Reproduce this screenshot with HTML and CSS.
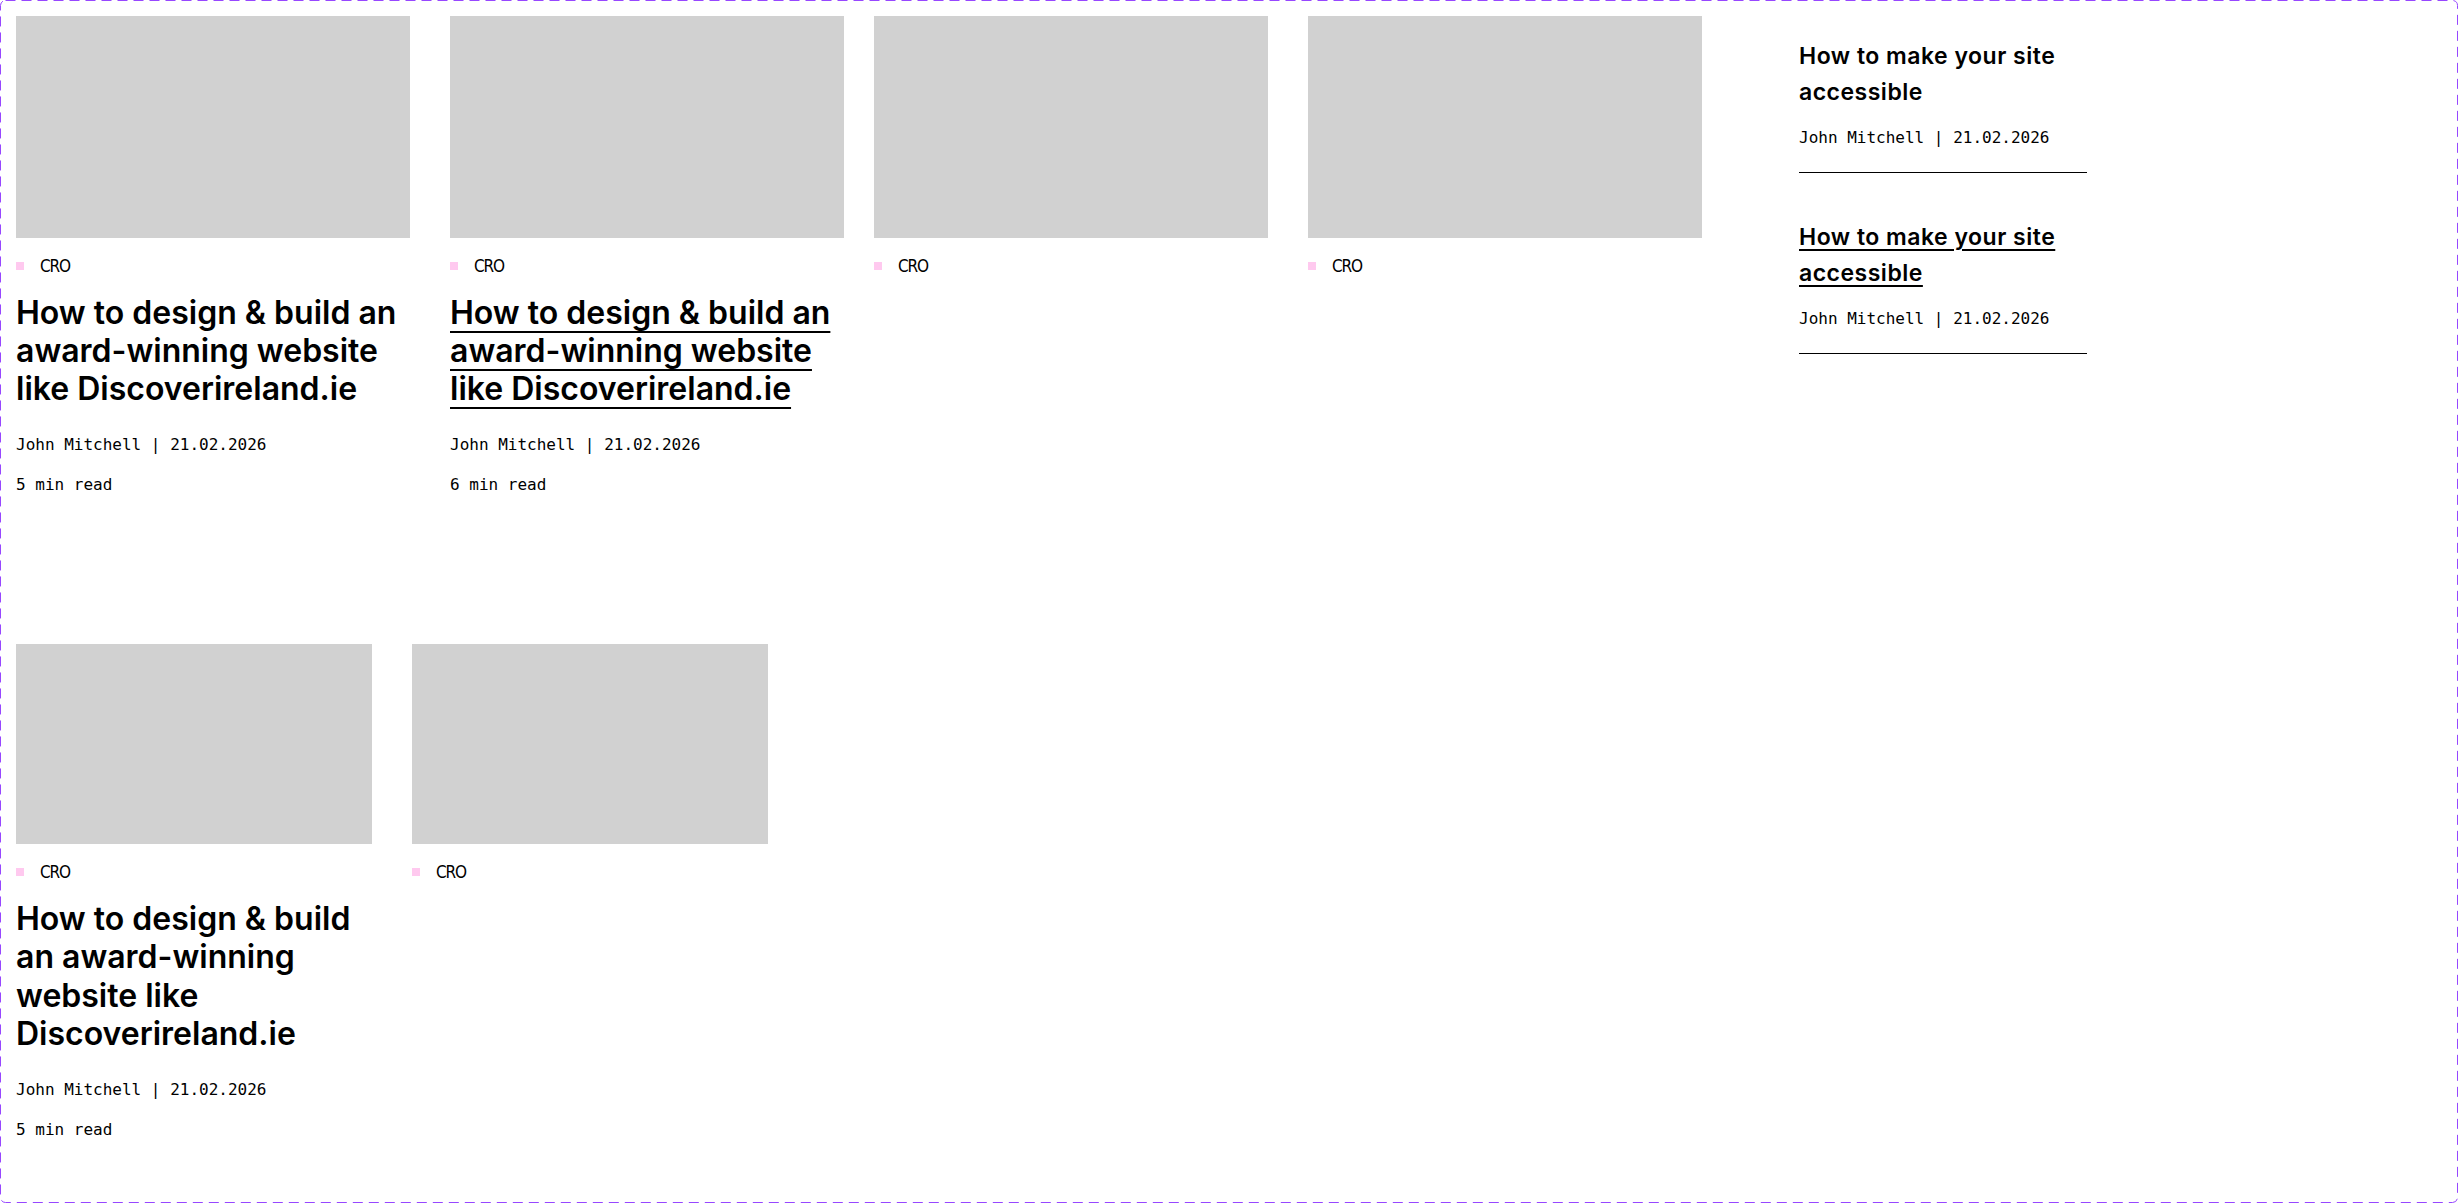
FILE: index.html
```html
<!doctype html>
<html>
<head>
	<meta http-equiv="content-type" content="text/html;charset=utf-8"/>
	<title>Blog listing</title>
	<link rel="stylesheet" href="styles.css">
</head>
<body>
	<div class="page">
		<svg class="frame" width="2458" height="1203" viewBox="0 0 2458 1203">
			<rect x="0.5" y="0.5" width="2457" height="1202" rx="5" ry="5"/>
		</svg>

		<div class="posts">
			<div class="row">
				<div class="group">
					<article class="card card-lg">
						<div class="thumb"></div>
						<div class="tag"><span class="tag-dot"></span>CRO</div>
						<h2 class="card-title">How to design &amp; build an award-winning website like Discoverireland.ie</h2>
						<p class="meta">John Mitchell | 21.02.2026</p>
						<p class="meta">5 min read</p>
					</article>
					<article class="card card-lg">
						<div class="thumb"></div>
						<div class="tag"><span class="tag-dot"></span>CRO</div>
						<h2 class="card-title"><a href="#">How to design &amp; build an award-winning website like Discoverireland.ie</a></h2>
						<p class="meta">John Mitchell | 21.02.2026</p>
						<p class="meta">6 min read</p>
					</article>
				</div>
				<div class="group">
					<article class="card card-lg">
						<div class="thumb"></div>
						<div class="tag"><span class="tag-dot"></span>CRO</div>
					</article>
					<article class="card card-lg">
						<div class="thumb"></div>
						<div class="tag"><span class="tag-dot"></span>CRO</div>
					</article>
				</div>
			</div>

			<div class="row row-small">
				<div class="group">
					<article class="card card-sm">
						<div class="thumb"></div>
						<div class="tag"><span class="tag-dot"></span>CRO</div>
						<h2 class="card-title">How to design &amp; build an award-winning website like Discoverireland.ie</h2>
						<p class="meta">John Mitchell | 21.02.2026</p>
						<p class="meta">5 min read</p>
					</article>
					<article class="card card-sm">
						<div class="thumb"></div>
						<div class="tag"><span class="tag-dot"></span>CRO</div>
					</article>
				</div>
			</div>
		</div>

		<aside class="side">
			<div class="side-item">
				<h3 class="side-title">How to make your site accessible</h3>
				<p class="meta">John Mitchell | 21.02.2026</p>
			</div>
			<div class="side-item">
				<h3 class="side-title"><a href="#">How to make your site accessible</a></h3>
				<p class="meta">John Mitchell | 21.02.2026</p>
			</div>
		</aside>
	</div>
</body>
</html>
```

FILE: styles.css
```css
body {
    margin: 0;
    background: #ffffff;
    color: #000000;
    font-family: Inter, "Noto Sans", sans-serif;
}
h2, h3, p {
    margin: 0;
}
a {
    color: inherit;
}

/* layouts */
.page {
    position: relative;
    box-sizing: border-box;
    width: 2458px;
    height: 1203px;
    padding: 16px;
    display: flex;
    align-items: flex-start;
}
.frame {
    position: absolute;
    left: 0;
    top: 0;
    pointer-events: none;
}
.frame rect {
    fill: none;
    stroke: #9747ff;
    stroke-width: 1;
    stroke-dasharray: 10 6;
}
.posts {
    width: 1686px;
    display: flex;
    flex-direction: column;
    gap: 147px;
}
.row {
    display: flex;
    gap: 30px;
}
.group {
    display: flex;
    gap: 40px;
}

/* cards */
.card-lg {
    width: 394px;
}
.card-sm {
    width: 356px;
}
.thumb {
    background: #d1d1d1;
    aspect-ratio: 16 / 9;
}
.tag {
    display: flex;
    align-items: center;
    gap: 16px;
    height: 24px;
    margin: 16px 0;
    font-family: "Liberation Sans Narrow", "DejaVu Sans Condensed", "Liberation Sans", sans-serif;
    font-stretch: condensed;
    font-size: 17px;
    letter-spacing: -1.2px;
}
.tag-dot {
    width: 8px;
    height: 8px;
    background: #ffc9ef;
}
.card-title {
    font-size: 32px;
    line-height: 1.2;
    font-weight: 600;
}
.card-title a {
    text-decoration-thickness: 2px;
    text-underline-offset: 7px;
}
.meta {
    font-family: "DejaVu Sans Mono", "Liberation Mono", monospace;
    font-size: 16px;
    line-height: 24px;
    margin-top: 24px;
}
.meta + .meta {
    margin-top: 16px;
}

/* side list */
.side {
    width: 288px;
    margin-left: 97px;
    display: flex;
    flex-direction: column;
    gap: 24px;
}
.side-item {
    padding: 22px 0;
    border-bottom: 1px solid #000000;
}
.side-title {
    font-size: 23px;
    line-height: 36px;
    font-weight: 600;
    letter-spacing: 0.5px;
}
.side-title a {
    text-decoration-thickness: 2px;
    text-underline-offset: 4px;
}
.side-item .meta {
    margin-top: 16px;
}
```
